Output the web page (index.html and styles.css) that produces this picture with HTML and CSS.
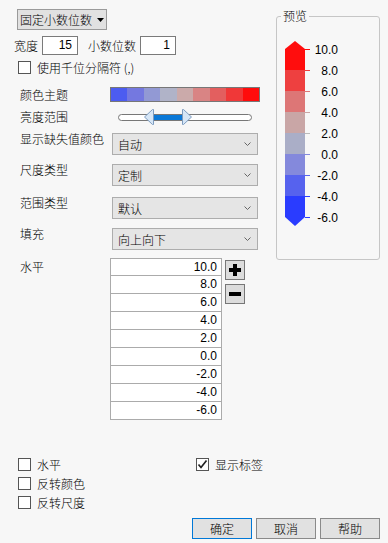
FILE: index.html
```html
<!DOCTYPE html>
<html lang="zh-CN">
<head>
    <meta charset="UTF-8">
    <meta name="viewport" content="width=device-width, initial-scale=1.0">
    <title>数值格式</title>
    <link rel="stylesheet" href="styles.css">
</head>
<body>
    <div class="dialog">
        <div class="top">
            <div class="left">
                <div class="format-btn">
                    <span>固定小数位数</span>
                    <svg class="caret" width="7" height="4" viewBox="0 0 7 4"><polygon points="0,0 7,0 3.5,4" fill="#000"/></svg>
                </div>

                <div class="size-row">
                    <span>宽度</span>
                    <span class="num-box">15</span>
                    <span class="size-label">小数位数</span>
                    <span class="num-box">1</span>
                </div>

                <div class="check-row sep-row">
                    <span class="check"></span>
                    <span class="check-text">使用千位分隔符 (,)</span>
                </div>

                <div class="prop-row theme-row">
                    <span class="prop-label">颜色主题</span>
                    <div class="theme-bar">
                        <span style="background:#4c5cf0"></span>
                        <span style="background:#7478e0"></span>
                        <span style="background:#9299d4"></span>
                        <span style="background:#b0b3c8"></span>
                        <span style="background:#cbaaaa"></span>
                        <span style="background:#d98484"></span>
                        <span style="background:#e35f5f"></span>
                        <span style="background:#f03838"></span>
                        <span style="background:#ff0c0c"></span>
                    </div>
                </div>

                <div class="prop-row slider-row">
                    <span class="prop-label">亮度范围</span>
                    <svg class="slider" width="150" height="16" viewBox="0 0 150 16">
                        <rect x="8.5" y="5.5" width="133" height="6" rx="3" fill="#fff" stroke="#777"/>
                        <rect x="42" y="6" width="31" height="5" fill="#0a78d7"/>
                        <polygon points="34.5,8 42.5,0.5 43.5,0.5 43.5,15.5 42.5,15.5" fill="#d6e6f6" stroke="#7d9cc0"/>
                        <polygon points="72.5,0.5 73.5,0.5 81.5,8 73.5,15.5 72.5,15.5" fill="#d6e6f6" stroke="#7d9cc0"/>
                    </svg>
                </div>

                <div class="prop-row sel-row first">
                    <span class="prop-label">显示缺失值颜色</span>
                    <div class="select"><span>自动</span><svg class="chev" width="7" height="4" viewBox="0 0 7 4"><polyline points="0.5,0.5 3.5,3.5 6.5,0.5" fill="none" stroke="#666"/></svg></div>
                </div>
                <div class="prop-row sel-row">
                    <span class="prop-label">尺度类型</span>
                    <div class="select"><span>定制</span><svg class="chev" width="7" height="4" viewBox="0 0 7 4"><polyline points="0.5,0.5 3.5,3.5 6.5,0.5" fill="none" stroke="#666"/></svg></div>
                </div>
                <div class="prop-row sel-row wide">
                    <span class="prop-label">范围类型</span>
                    <div class="select"><span>默认</span><svg class="chev" width="7" height="4" viewBox="0 0 7 4"><polyline points="0.5,0.5 3.5,3.5 6.5,0.5" fill="none" stroke="#666"/></svg></div>
                </div>
                <div class="prop-row sel-row">
                    <span class="prop-label">填充</span>
                    <div class="select"><span>向上向下</span><svg class="chev" width="7" height="4" viewBox="0 0 7 4"><polyline points="0.5,0.5 3.5,3.5 6.5,0.5" fill="none" stroke="#666"/></svg></div>
                </div>

                <div class="prop-row level-row">
                    <span class="prop-label">水平</span>
                    <div class="levels">
                        <div class="level">10.0</div>
                        <div class="level">8.0</div>
                        <div class="level">6.0</div>
                        <div class="level">4.0</div>
                        <div class="level">2.0</div>
                        <div class="level">0.0</div>
                        <div class="level">-2.0</div>
                        <div class="level">-4.0</div>
                        <div class="level">-6.0</div>
                    </div>
                    <div class="level-btns">
                        <div class="sq-btn">
                            <svg width="12" height="12" viewBox="0 0 12 12"><rect x="4" y="0" width="4" height="12" fill="#000"/><rect x="0" y="4" width="12" height="4" fill="#000"/></svg>
                        </div>
                        <div class="sq-btn">
                            <svg width="12" height="4" viewBox="0 0 12 4"><rect x="0" y="0" width="12" height="4" fill="#000"/></svg>
                        </div>
                    </div>
                </div>
            </div>

            <fieldset class="preview">
                <legend>预览</legend>
                <svg class="legend-svg" width="102" height="236" viewBox="0 0 102 236">
                    <polygon points="18,18 28,26 28,47 8,47 8,26" fill="#ff0d0d"/>
                    <rect x="8" y="47" width="20" height="21" fill="#ee4040"/>
                    <rect x="8" y="68" width="20" height="21" fill="#dd7676"/>
                    <rect x="8" y="89" width="20" height="21" fill="#c9a6a6"/>
                    <rect x="8" y="110" width="20" height="21" fill="#aaaec7"/>
                    <rect x="8" y="131" width="20" height="21" fill="#8489dc"/>
                    <rect x="8" y="152" width="20" height="21" fill="#5662ee"/>
                    <polygon points="8,173 28,173 28,194 18,203 8,194" fill="#2a3cff"/>

                    <line x1="28" y1="26.5" x2="33" y2="26.5" stroke="#ff0d0d"/>
                    <line x1="28" y1="47.5" x2="33" y2="47.5" stroke="#ee4040"/>
                    <line x1="28" y1="68.5" x2="33" y2="68.5" stroke="#dd7676"/>
                    <line x1="28" y1="89.5" x2="33" y2="89.5" stroke="#c9a6a6"/>
                    <line x1="28" y1="110.5" x2="33" y2="110.5" stroke="#bbbbbb"/>
                    <line x1="28" y1="131.5" x2="33" y2="131.5" stroke="#8489dc"/>
                    <line x1="28" y1="152.5" x2="33" y2="152.5" stroke="#5662ee"/>
                    <line x1="28" y1="173.5" x2="33" y2="173.5" stroke="#2a3cff"/>
                    <line x1="28" y1="194.5" x2="33" y2="194.5" stroke="#2a3cff"/>

                    <g class="tick-text" text-anchor="end">
                        <text x="61" y="31">10.0</text>
                        <text x="61" y="52">8.0</text>
                        <text x="61" y="73">6.0</text>
                        <text x="61" y="94">4.0</text>
                        <text x="61" y="115">2.0</text>
                        <text x="61" y="136">0.0</text>
                        <text x="61" y="157">-2.0</text>
                        <text x="61" y="178">-4.0</text>
                        <text x="61" y="199">-6.0</text>
                    </g>
                </svg>
            </fieldset>
        </div>

        <div class="bottom">
            <div class="checks-left">
                <div class="check-row opt"><span class="check"></span><span class="check-text">水平</span></div>
                <div class="check-row opt"><span class="check"></span><span class="check-text">反转颜色</span></div>
                <div class="check-row opt"><span class="check"></span><span class="check-text">反转尺度</span></div>
            </div>
            <div class="checks-right">
                <div class="check-row opt">
                    <span class="check checked">
                        <svg width="11" height="11" viewBox="0 0 11 11"><polyline points="1.5,5.5 4,8.5 9.5,1.5" fill="none" stroke="#222" stroke-width="1.7"/></svg>
                    </span>
                    <span class="check-text">显示标签</span>
                </div>
            </div>
        </div>

        <div class="button-row">
            <button class="dlg-btn default">确定</button>
            <button class="dlg-btn">取消</button>
            <button class="dlg-btn">帮助</button>
        </div>
    </div>
</body>
</html>
```

FILE: styles.css
```css
body {
    margin: 0;
    background-color: #f7f7f7;
    font-family: "Noto Sans CJK SC", "Liberation Sans", sans-serif;
    font-size: 12px;
    font-weight: 300;
    color: #000;
}

.dialog {
    width: 388px;
    height: 543px;
}

.top {
    display: flex;
    align-items: flex-start;
}

.left {
    width: 262px;
}

/* format button */
.format-btn {
    display: flex;
    align-items: center;
    box-sizing: border-box;
    width: 90px;
    height: 21px;
    margin: 9px 0 0 17px;
    padding-left: 2px;
    background-color: #e1e1e1;
    border: 1px solid #9a9a9a;
    line-height: 19px;
}
.format-btn .caret {
    margin-left: 5px;
}

/* width / decimals */
.size-row {
    display: flex;
    align-items: center;
    margin-top: 6px;
    padding-left: 14px;
    height: 19px;
}
.num-box {
    box-sizing: border-box;
    width: 36px;
    height: 19px;
    margin-left: 4px;
    padding-right: 5px;
    background: #fff;
    border: 1px solid #7a7a7a;
    font-family: "Liberation Sans", sans-serif;
    font-weight: 400;
    text-align: right;
    line-height: 17px;
}
.size-label {
    margin-left: 10px;
}

/* checkboxes */
.check-row {
    display: flex;
    align-items: center;
}
.check {
    display: flex;
    align-items: center;
    justify-content: center;
    box-sizing: border-box;
    width: 13px;
    height: 13px;
    background: #fff;
    border: 1px solid #555;
}
.check-text {
    margin-left: 6px;
}
.sep-row {
    margin-top: 6px;
    padding-left: 18px;
    height: 13px;
    line-height: 13px;
}

/* label + control rows */
.prop-row {
    display: flex;
    align-items: flex-start;
    padding-left: 20px;
}
.prop-label {
    width: 90px;
    flex-shrink: 0;
    line-height: 12px;
}

.theme-row {
    margin-top: 13px;
}
.theme-row .prop-label {
    line-height: 15px;
}
.theme-bar {
    display: flex;
    box-sizing: border-box;
    width: 150px;
    height: 15px;
    border: 1px solid #777;
}
.theme-bar span {
    flex: 1;
}

.slider-row {
    margin-top: 7px;
}
.slider-row .prop-label {
    line-height: 14px;
    margin-top: 1px;
}
.slider {
    display: block;
}

.sel-row {
    margin-top: 9px;
}
.sel-row.first {
    margin-top: 8px;
}
.sel-row.wide {
    margin-top: 11px;
}
.select {
    display: flex;
    align-items: center;
    justify-content: space-between;
    box-sizing: border-box;
    width: 146px;
    height: 22px;
    margin-left: 2px;
    padding: 0 6px 0 5px;
    background-color: #e5e5e5;
    border: 1px solid #adadad;
}

/* levels table */
.level-row {
    margin-top: 8px;
}
.level-row .prop-label {
    margin-top: 3px;
}
.levels {
    width: 112px;
}
.level {
    box-sizing: border-box;
    height: 18px;
    padding-right: 4px;
    background: #fff;
    border: 1px solid #ababab;
    border-top-width: 0;
    font-family: "Liberation Sans", sans-serif;
    font-weight: 400;
    text-align: right;
    line-height: 17px;
}
.level:first-child {
    border-top-width: 1px;
    line-height: 16px;
}
.level-btns {
    display: flex;
    flex-direction: column;
    gap: 4px;
    margin: 2px 0 0 3px;
}
.sq-btn {
    display: flex;
    align-items: center;
    justify-content: center;
    box-sizing: border-box;
    width: 20px;
    height: 20px;
    background-color: #dcdcdc;
    border: 1px solid #777;
}

/* preview */
.preview {
    box-sizing: border-box;
    width: 104px;
    margin: 9px 0 0 14px;
    padding: 0;
    border: 1px solid #c6c6c6;
    border-radius: 3px;
}
.preview legend {
    margin-left: 4px;
    padding: 0 2px;
    line-height: 14px;
}
.legend-svg {
    display: block;
}
.tick-text {
    font-family: "Liberation Sans", sans-serif;
    font-size: 12px;
    font-weight: 400;
    fill: #000;
}

/* bottom options */
.bottom {
    display: flex;
    margin-top: 35px;
}
.checks-left {
    width: 178px;
    padding-left: 18px;
}
.opt {
    height: 19px;
}

.button-row {
    display: flex;
    justify-content: flex-end;
    gap: 4px;
    margin-top: 6px;
    padding-right: 8px;
}
.dlg-btn {
    box-sizing: border-box;
    width: 60px;
    height: 21px;
    padding: 0;
    background-color: #e1e1e1;
    border: 1px solid #8a8a8a;
    font-family: "Noto Sans CJK SC", sans-serif;
    font-size: 12px;
    font-weight: 300;
    color: #000;
}
.dlg-btn.default {
    border-color: #0078d7;
}
```
